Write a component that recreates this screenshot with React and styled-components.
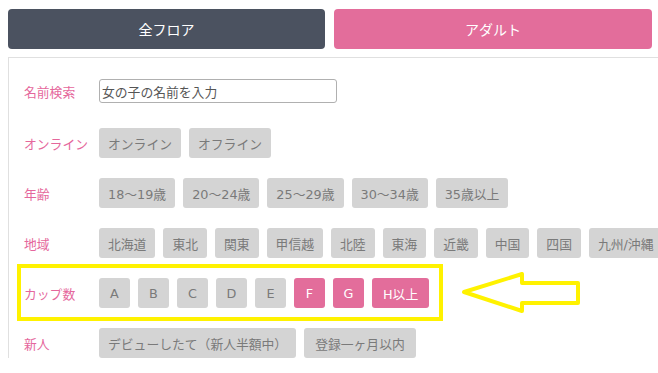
import React from 'react';
import styled, { createGlobalStyle } from 'styled-components';

const GlobalStyle = createGlobalStyle`
  html, body {
    margin: 0;
    padding: 0;
    background: #fff;
    overflow: hidden;
  }
  body {
    font-family: "DejaVu Sans", "Noto Sans CJK JP", sans-serif;
  }
`;

const Page = styled.div`
  position: relative;
  width: 658px;
  height: 373px;
`;

const Tabs = styled.div`
  display: grid;
  grid-template-columns: 317px 318px;
  gap: 9px;
  padding: 9px 6px 0 8px;
`;

const Tab = styled.div`
  height: 40px;
  border-radius: 4px;
  background: ${p => (p.$pink ? '#e36d9b' : '#4b5260')};
  color: #fff;
  font-size: 14px;
  display: flex;
  align-items: center;
  justify-content: center;
`;

const Panel = styled.div`
  margin: 8px 0 0 8px;
  border-top: 1px solid #e0e0e0;
  border-left: 1px solid #e0e0e0;
  padding: 21px 0 0 15px;
  display: flex;
  flex-direction: column;
  gap: 20px;
`;

const Row = styled.div`
  display: flex;
  align-items: center;
  height: ${p => (p.$input ? '24px' : '30px')};
  margin-bottom: ${p => (p.$input ? '5px' : '0')};
  white-space: nowrap;
`;

const Label = styled.div`
  width: 75px;
  flex: none;
  color: #e5679c;
  font-size: 12.8px;
`;

const Field = styled.div`
  width: 234px;
  height: 22px;
  border: 1px solid #b0b0b0;
  border-radius: 3px;
  color: #555;
  font-size: 12.8px;
  display: flex;
  align-items: center;
  padding-left: 2px;
`;

const Chips = styled.div`
  display: flex;
  gap: 8px;
`;

const Chip = styled.div`
  flex: none;
  height: 30px;
  min-width: 31px;
  box-sizing: border-box;
  padding: 0 ${p => (p.$wide ? '11px' : '9px')};
  border-radius: 3px;
  background: ${p => (p.$on ? '#e36d9b' : '#d4d4d4')};
  color: ${p => (p.$on ? '#fff' : '#7a7a7a')};
  font-size: 12.8px;
  display: flex;
  align-items: center;
  justify-content: center;
`;

const Highlight = styled.div`
  position: absolute;
  left: 17px;
  top: 264px;
  width: 426px;
  height: 57px;
  box-sizing: border-box;
  border: 4px solid #fff200;
`;

const Arrow = styled.svg`
  position: absolute;
  left: 458px;
  top: 268px;
`;

const rows = [
  { label: 'オンライン', items: ['オンライン', 'オフライン'] },
  { label: '年齢', items: ['18〜19歳', '20〜24歳', '25〜29歳', '30〜34歳', '35歳以上'] },
  { label: '地域', items: ['北海道', '東北', '関東', '甲信越', '北陸', '東海', '近畿', '中国', '四国', '九州/沖縄'] },
];

const cups = ['A', 'B', 'C', 'D', 'E', 'F', 'G', 'H以上'];
const activeCups = ['F', 'G', 'H以上'];

export default function App() {
  return (
    <Page>
      <GlobalStyle />
      <Tabs>
        <Tab>全フロア</Tab>
        <Tab $pink>アダルト</Tab>
      </Tabs>
      <Panel>
        <Row $input>
          <Label>名前検索</Label>
          <Field>女の子の名前を入力</Field>
        </Row>
        {rows.map(r => (
          <Row key={r.label}>
            <Label>{r.label}</Label>
            <Chips>
              {r.items.map(i => <Chip key={i}>{i}</Chip>)}
            </Chips>
          </Row>
        ))}
        <Row>
          <Label>カップ数</Label>
          <Chips>
            {cups.map(c => (
              <Chip key={c} $on={activeCups.includes(c)} $wide={c.length > 1}>{c}</Chip>
            ))}
          </Chips>
        </Row>
        <Row>
          <Label>新人</Label>
          <Chips>
            <Chip>デビューしたて（新人半額中）</Chip>
            <Chip $wide>登録一ヶ月以内</Chip>
          </Chips>
        </Row>
      </Panel>
      <Highlight />
      <Arrow width="126" height="48" viewBox="0 0 126 48">
        <polygon
          points="6,24 64,6 64,15 120,15 120,35 64,35 64,43"
          fill="none"
          stroke="#fff200"
          strokeWidth="4"
          strokeLinejoin="round"
        />
      </Arrow>
    </Page>
  );
}
